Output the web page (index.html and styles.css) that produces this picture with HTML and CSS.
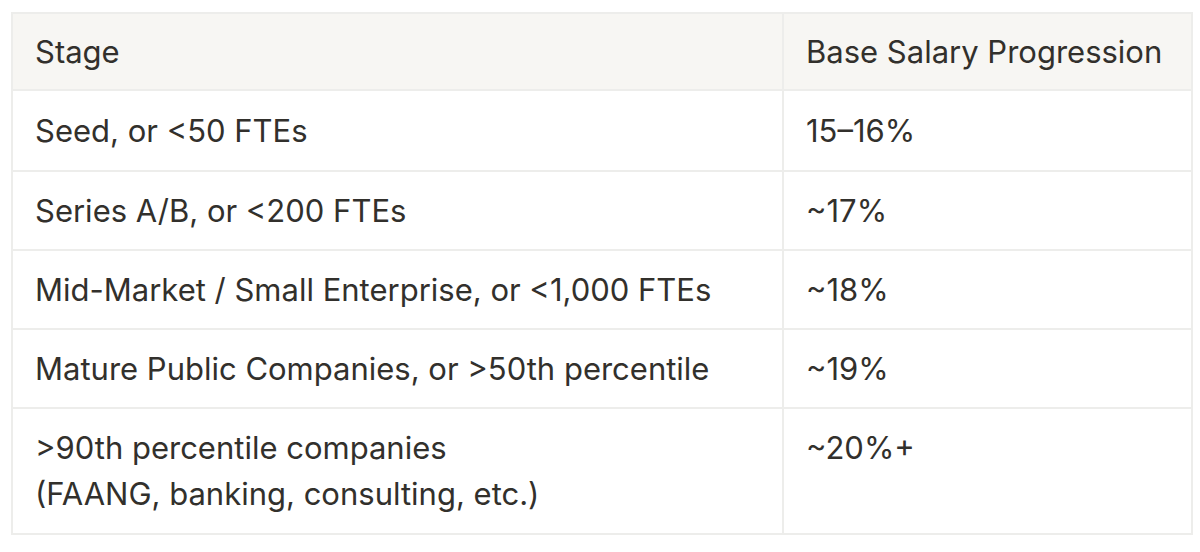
FILE: index.html
```html
<!DOCTYPE html>
<html lang="en">
<head>
<meta charset="utf-8">
<title>Base Salary Progression</title>
<link rel="stylesheet" href="styles.css">
</head>
<body>
<div class="wrap">
<table class="tbl">
<colgroup><col class="c1"><col class="c2"></colgroup>
<thead>
<tr><th>Stage</th><th>Base Salary Progression</th></tr>
</thead>
<tbody>
<tr class="first"><td>Seed, or &lt;50 FTEs</td><td>15–16%</td></tr>
<tr><td>Series A/B, or &lt;200 FTEs</td><td>~17%</td></tr>
<tr><td>Mid-Market / Small Enterprise, or &lt;1,000 FTEs</td><td>~18%</td></tr>
<tr><td>Mature Public Companies, or &gt;50th percentile</td><td>~19%</td></tr>
<tr class="last"><td>&gt;90th percentile companies<br>(FAANG, banking, consulting, etc.)</td><td>~20%+</td></tr>
</tbody>
</table>
</div>
</body>
</html>
```
FILE: styles.css
```css
html, body {
  margin: 0;
  padding: 0;
  background: #ffffff;
}
.wrap {
  padding: 12px 0 0 11px;
}
.tbl {
  border-collapse: collapse;
  table-layout: fixed;
  width: 1180px;
  font-family: Inter, "Noto Sans", sans-serif;
  font-size: 31px;
  line-height: 46px;
  color: #32302c;
}
.c1 { width: 771px; }
.c2 { width: 409px; }
.tbl th,
.tbl td {
  border: 2px solid #ededeb;
  padding: 16px 20px 15px 22px;
  text-align: left;
  vertical-align: top;
  font-weight: 400;
  white-space: nowrap;
}
.tbl th {
  padding-top: 15px;
  padding-bottom: 14px;
  background: #f7f6f3;
}
.tbl .first td {
  padding-top: 17px;
  padding-bottom: 16px;
}
.tbl .last td {
  padding-bottom: 16px;
}
```
